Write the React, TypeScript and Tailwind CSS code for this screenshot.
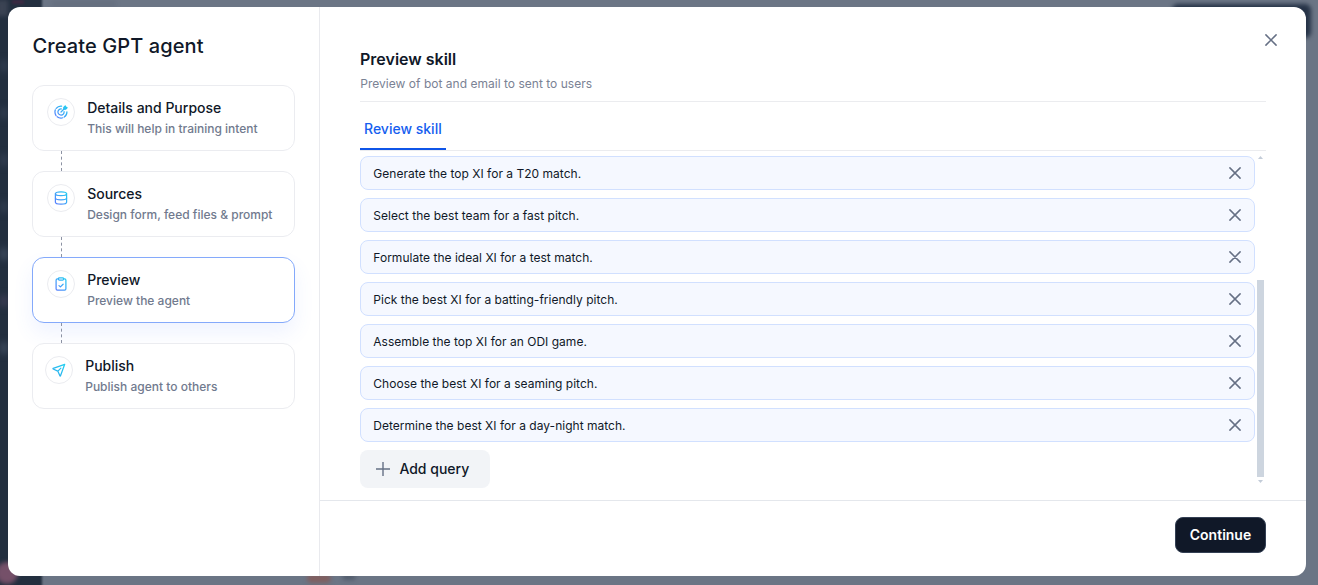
import React from "react";

const queries = [
  "Generate the top XI for a T20 match.",
  "Select the best team for a fast pitch.",
  "Formulate the ideal XI for a test match.",
  "Pick the best XI for a batting-friendly pitch.",
  "Assemble the top XI for an ODI game.",
  "Choose the best XI for a seaming pitch.",
  "Determine the best XI for a day-night match.",
];

function StepIcon({ name }: { name: string }) {
  const stroke = `url(#grad-${name})`;
  return (
    <svg viewBox="0 0 14 14" className="size-3.5" fill="none" stroke={stroke} strokeWidth="1.25" strokeLinecap="round" strokeLinejoin="round">
      <defs>
        <linearGradient id={`grad-${name}`} gradientUnits="userSpaceOnUse" x1="13" y1="1" x2="1" y2="13">
          <stop offset="0" stopColor="#1fd0f0" />
          <stop offset="1" stopColor={name === "publish" ? "#2fa8ee" : "#5b7cff"} />
        </linearGradient>
      </defs>
      {name === "target" && (
        <>
          <path d="M7.6 1.1A6 6 0 1 0 12.9 6.4" strokeDasharray="6 1.6" />
          <path d="M7.3 3.9A3.1 3.1 0 1 0 10.1 6.7" />
          <path d="M7 7l3-3" />
          <path d="M9.8 4.2V2.5l1.5-1.5.5 1.2 1.2.5-1.5 1.5z" fill={stroke} />
        </>
      )}
      {name === "sources" && (
        <>
          <ellipse cx="7" cy="2.8" rx="5.6" ry="1.9" />
          <path d="M1.4 2.8v8.4c0 1 2.5 1.9 5.6 1.9s5.6-.9 5.6-1.9V2.8" />
          <path d="M1.4 7c0 1 2.5 1.8 5.6 1.8s5.6-.8 5.6-1.8" />
        </>
      )}
      {name === "preview" && (
        <>
          <path d="M4.5 1.9H3.4c-.9 0-1.3.5-1.3 1.3v8.6c0 .8.5 1.3 1.3 1.3h7.2c.8 0 1.3-.5 1.3-1.3V3.2c0-.8-.5-1.3-1.3-1.3H9.5" />
          <rect x="4.5" y=".8" width="5" height="2.2" rx=".8" />
          <path d="M5 8.6l1.4 1.3 2.7-2.7" />
        </>
      )}
      {name === "publish" && (
        <path d="M12.7 1.3L1.2 5.4c-.3.1-.3.5 0 .6l4.6 2.1 2.1 4.7c.1.3.5.3.6 0zM5.9 8.1l3-3" />
      )}
    </svg>
  );
}

const steps = [
  { icon: "target", title: "Details and Purpose", text: "This will help in training intent" },
  { icon: "sources", title: "Sources", text: "Design form, feed files & prompt" },
  { icon: "preview", title: "Preview", text: "Preview the agent" },
  { icon: "publish", title: "Publish", text: "Publish agent to others" },
];

function Cross() {
  return (
    <svg viewBox="0 0 12 12" className="size-3" fill="none" stroke="#667085" strokeWidth="1.5" strokeLinecap="round">
      <path d="M.9.9l10.2 10.2M11.1.9L.9 11.1" />
    </svg>
  );
}

function Step({ index }: { index: number }) {
  const s = steps[index];
  const active = s.icon === "preview";
  const last = s.icon === "publish";
  return (
    <>
      {index > 0 && <div className="relative z-10 ml-[29px] h-5 w-px border-l border-dashed border-[#8c92a3]" />}
      <div
        className={`flex h-[66px] rounded-xl border bg-white pt-3 ${last ? "pl-3" : "pl-3.5"} ${
          active ? "border-[#84a9fb] shadow-[0_10px_20px_rgba(80,120,255,0.09)]" : "relative border-[#ebecf0]"
        }`}
      >
        <div className="flex size-7 shrink-0 items-center justify-center rounded-full border border-[#ebecf0]">
          <StepIcon name={s.icon} />
        </div>
        <div className="ml-3 pl-[0.2px] whitespace-nowrap">
          <div className="text-[14px] leading-5 font-medium text-[#101828]">{s.title}</div>
          <div className="mt-0.5 text-[12px] leading-[18px] font-medium text-[#717a8e]">{s.text}</div>
        </div>
      </div>
    </>
  );
}

export default function App() {
  return (
    <div className="relative h-[585px] w-[1318px] overflow-hidden bg-[#6b7585] pt-[7px] pl-2 font-['Inter',sans-serif]">
      <div className="absolute -top-2 -bottom-2 -left-2 w-[50px] bg-[#232f3f] blur-[1px]" />
      <div className="absolute top-0 left-[52px] h-2 w-16 bg-[#656f7f] blur-[2px]" />
      <div className="absolute top-1 left-[1172px] h-[34px] w-[139px] rounded-md bg-[#263347] blur-[2px]" />
      <div className="absolute top-[562px] -left-1 size-[22px] rounded-full bg-[#755069] blur-[2px]" />
      <div className="absolute top-[574px] left-[307px] h-[9px] w-6 rounded-full bg-[#805f60] blur-[2px]" />
      <div className="absolute top-[574px] left-[343px] h-[6px] w-3 bg-[#515c6c] blur-[2px]" />
      <div className="absolute top-0 -left-1 h-4 w-3 bg-[#3b4353] blur-[2px]" />
      <div className="absolute top-0 left-3 h-1 w-3 bg-[#3b2942] blur-[1px]" />
      <div className="absolute top-[60px] left-0 flex flex-col gap-[35px] blur-[3px]">
        <i className="h-3 w-2 bg-[#303c4e]" />
        <i className="h-3 w-2 bg-[#303c4e]" />
        <i className="h-3 w-2 bg-[#303c4e]" />
        <i className="h-3 w-2 bg-[#303c4e]" />
        <i className="h-3 w-2 bg-[#3a4759]" />
        <i className="h-3 w-2 bg-[#393b52]" />
        <i className="h-3 w-2 bg-[#3a4759]" />
      </div>

      <div className="relative flex h-[569px] w-[1298px] overflow-hidden rounded-xl bg-white">
        <aside className="w-[312px] shrink-0 border-r border-[#e9eaee] pt-6 pr-6 pl-6">
          <h1 className="mb-9 h-[18px] pl-[0.5px] text-[20px] leading-[30px] font-medium tracking-[0.1px] text-[#101828]">Create GPT agent</h1>
          <nav>
            {steps.map((s, i) => (
              <Step key={s.icon} index={i} />
            ))}
          </nav>
        </aside>

        <main className="flex grow flex-col">
          <div className="flex h-[493px] flex-col pr-10 pl-10">
            <div className="flex h-[95px] shrink-0 flex-col border-b border-[#ebecef] pt-10 pb-1.5">
              <h2 className="text-[16px] leading-6 font-semibold text-[#101828]">Preview skill</h2>
              <p className="mt-1 pl-[0.3px] text-[12px] leading-[18px] tracking-[0.02px] text-[#7a8294]">Preview of bot and email to sent to users</p>
            </div>
            <div className="flex h-[49px] shrink-0 items-end border-b border-[#ebecef]">
              <div className="h-[35px] border-b-2 border-[#0f55e8] px-1 pt-1 text-[14px] leading-5 font-medium text-[#155eef]">Review skill</div>
            </div>
            <div className="flex pt-[5px]">
              <div className="flex w-[895px] flex-col gap-2">
                {queries.map((q) => (
                  <div key={q} className="flex h-[34px] items-center justify-between rounded-lg border border-[#d1e0ff] bg-[#f5f8ff] pr-[13px] pl-3">
                    <span className="pt-0.5 pl-[0.3px] text-[12px] leading-4 tracking-[0.02px] text-[#101828]">{q}</span>
                    <Cross />
                  </div>
                ))}
                <button className="flex h-[38px] w-[130px] items-center rounded-lg bg-[#f2f4f7] pl-4 text-[14px] font-medium text-[#101828]">
                  <svg viewBox="0 0 14 14" className="mr-[9px] size-3.5" stroke="#667085" strokeWidth="1.4">
                    <path d="M7 0v14M0 7h14" />
                  </svg>
                  <span className="pl-[0.4px] leading-5">Add query</span>
                </button>
              </div>
              <div className="ml-0.5 flex h-[327px] w-[7px] flex-col items-center">
                <svg viewBox="0 0 5 3" className="h-[3px] w-[5px]" fill="#c3ccd8"><path d="M0 3L2.5 0 5 3z" /></svg>
                <div className="mt-[121px] h-[197px] w-[7px] shrink-0 bg-[#cdd5df]" />
                <svg viewBox="0 0 5 3" className="mt-[3px] h-[3px] w-[5px] shrink-0" fill="#c3ccd8"><path d="M0 0h5L2.5 3z" /></svg>
              </div>
            </div>
          </div>
          <footer className="flex h-[76px] justify-end border-t border-[#e4e7ec] pt-4 pr-10">
            <button className="h-9 w-[91px] rounded-lg border border-[#344054] bg-[#101828] text-[14px] leading-5 font-semibold text-white">Continue</button>
          </footer>
        </main>
        <button aria-label="Close" className="absolute top-[27px] right-[29px]"><Cross /></button>
      </div>
    </div>
  );
}
